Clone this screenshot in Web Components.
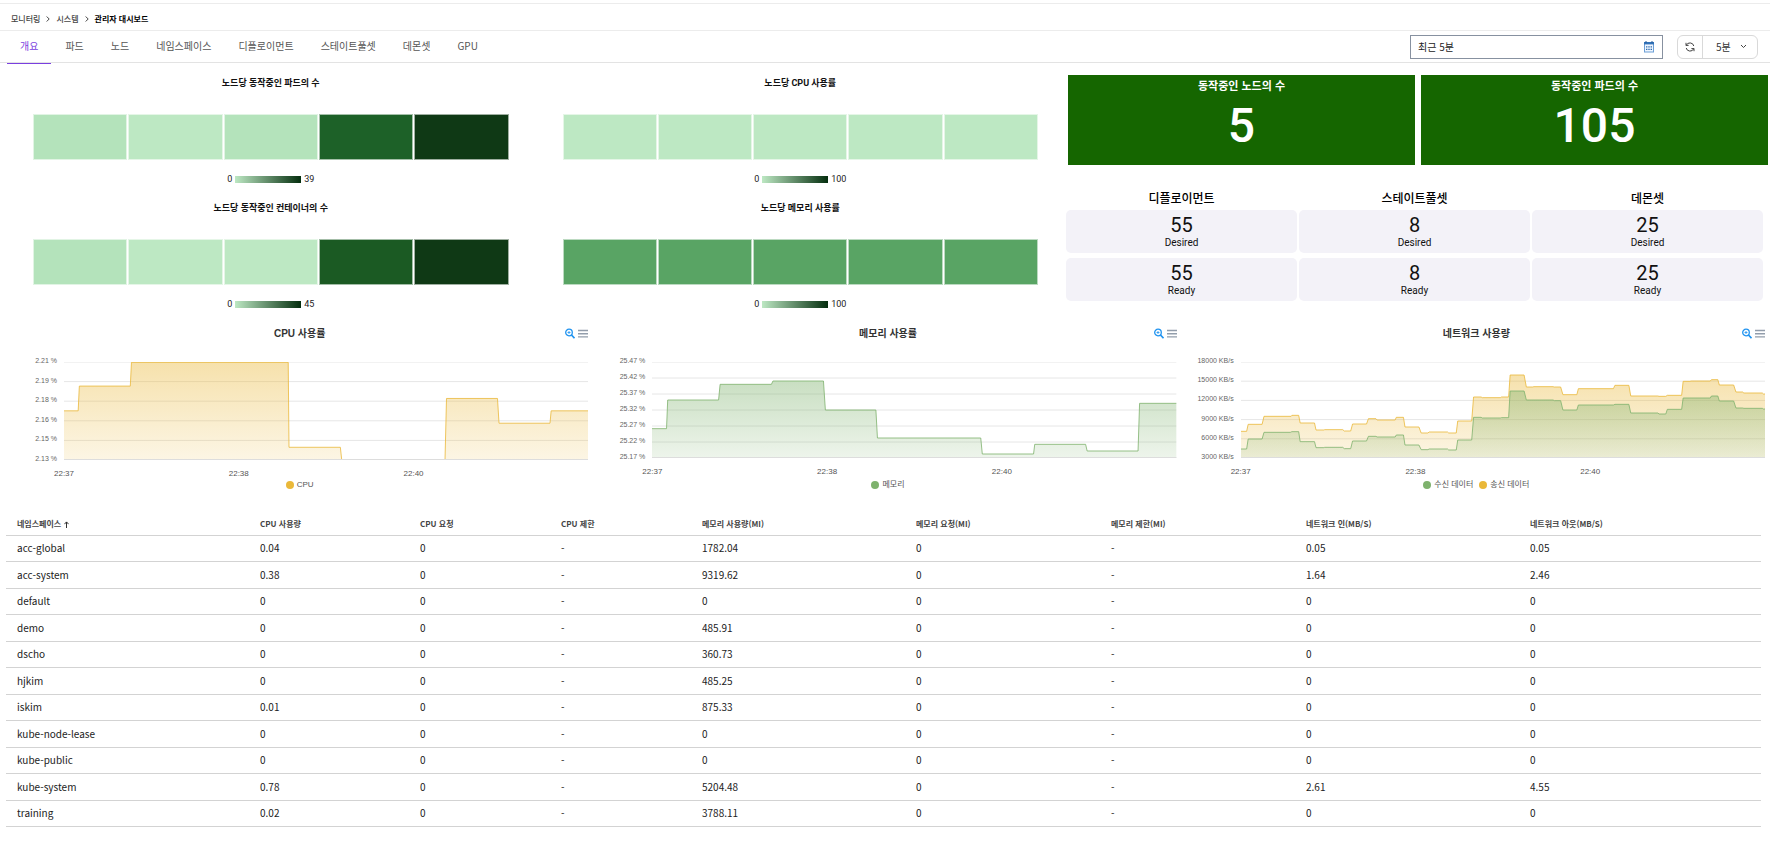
<!DOCTYPE html>
<html lang="ko">
<head>
<meta charset="utf-8">
<meta name="viewport" content="width=device-width, initial-scale=1">
<title>관리자 대시보드</title>
<style>
  body {
    margin: 0;
    background: #fff;
    color: #222;
    font-family: Roboto, "Noto Sans CJK KR", sans-serif;
    font-size: 10px;
    line-height: 12px;
  }
</style>
</head>
<body>
<dashboard-page></dashboard-page>

<script>
class Base extends HTMLElement {
  connectedCallback() {
    if (this.shadowRoot) return;
    this.attachShadow({ mode: 'open' }).innerHTML =
      `<style>*{box-sizing:border-box}:host{display:block;box-sizing:border-box}${this.css()}</style>${this.html()}`;
  }
}

customElements.define('bread-crumb', class extends Base {
  css() { return `
    :host { border-top: 1px solid #ececec; border-bottom: 1px solid #ececec; margin-top: 3px; }
    ol { list-style: none; margin: 0; padding: 4px 11px 0; height: 26px; display: flex; align-items: center; gap: 6px;
         font: 500 8px/12px "Noto Sans CJK KR", sans-serif; }
    li { display: flex; align-items: center; gap: 6px; }
    a { color: #444; text-decoration: none; }
    a[aria-current] { color: #000; font-weight: 700; }
    svg { width: 4px; height: 6px; fill: none; stroke: #444; }`; }
  html() {
    const chevron = '<svg viewBox="0 0 4 6" aria-hidden="true"><path d="M.7.5 3.2 3 .7 5.5"/></svg>';
    return `<nav aria-label="breadcrumb"><ol>
      <li><a href="#monitoring">모니터링</a>${chevron}</li>
      <li><a href="#system">시스템</a>${chevron}</li>
      <li><a href="#dashboard" aria-current="page">관리자 대시보드</a></li></ol></nav>`;
  }
});

customElements.define('tab-bar', class extends Base {
  css() { return `
    :host { display: flex; align-items: center; justify-content: space-between; padding: 0 12px 0 7px; height: 32px; border-bottom: 1px solid #e3e3e3; }
    nav { display: flex; gap: 1px; align-self: stretch; }
    button { border: 0; background: none; padding: 0 13px 2px; margin-bottom: -2px; font: 10px/12px "Noto Sans CJK KR", sans-serif; color: #555;
             border-bottom: 1px solid transparent; }
    button[aria-selected=true] { color: #7a3fe0; border-bottom-color: #7a3fe0; }
    .tools { display: flex; align-items: center; gap: 14px; padding-top: 1px; }`; }
  html() {
    const tabs = ['개요', '파드', '노드', '네임스페이스', '디플로이먼트', '스테이트풀셋', '데몬셋', 'GPU'];
    return `<nav role="tablist">${tabs.map((t, i) => `<button role="tab" aria-selected="${i === 0}">${t}</button>`).join('')}</nav>
      <div class="tools"><slot></slot></div>`;
  }
});

customElements.define('range-input', class extends Base {
  css() { return `
    label { display: flex; align-items: center; width: 253px; height: 24px; border: 1px solid #8791a0; padding: 0 8px 0 7px; background: #fff; }
    input { flex: 1; min-width: 0; border: 0; padding: 0; outline: 0; background: none; color: #222; font: 10px/14px "Noto Sans CJK KR", sans-serif; }
    svg { width: 10px; height: 12px; flex: none; }`; }
  html() { return `<label><input type="text" aria-label="조회 기간" value="최근 5분">
    <svg viewBox="0 0 10 12" aria-hidden="true"><rect x=".5" y="1.5" width="9" height="9.5" fill="#eef6ff" stroke="#6d9fd6"/>
    <path d="M0 1h10v2.4H0z" fill="#3272b8"/><path d="M2 0v2M8 0v2" stroke="#225a9c"/>
    <path d="M2 5.8h1.4M4.3 5.8h1.4M6.6 5.8H8M2 8.3h1.4M4.3 8.3h1.4M6.6 8.3H8" stroke="#2f6cb0" stroke-width="1.2"/></svg></label>`; }
});

customElements.define('refresh-control', class extends Base {
  css() { return `
    .group { display: flex; height: 24px; border: 1px solid #d9d9d9; border-radius: 6px; }
    button { width: 25px; padding: 0; border: 0; border-right: 1px solid #d9d9d9; background: none; display: flex; align-items: center; justify-content: center; }
    button svg { width: 10px; height: 10px; fill: none; stroke: #444; }
    .pick { position: relative; display: flex; align-items: center; }
    select { appearance: none; border: 0; background: none; width: 54px; padding: 0 12px 0 13px; height: 22px; color: #333; font: 10px/14px "Noto Sans CJK KR", sans-serif; }
    .pick svg { position: absolute; right: 10px; top: 8px; width: 7px; height: 5px; fill: none; stroke: #444; pointer-events: none; }`; }
  html() { return `<div class="group"><button aria-label="새로고침"><svg viewBox="0 0 10 10">
      <path d="M1 .8v2.6h2.6M1.2 3.4A4 4 0 0 1 8.8 4M9 9.2V6.6H6.4M8.8 6.6A4 4 0 0 1 1.2 6"/></svg></button>
    <div class="pick"><select aria-label="새로고침 주기"><option>5분</option></select>
    <svg viewBox="0 0 7 5" aria-hidden="true"><path d="M1 1l2.5 2.5L6 1"/></svg></div></div>`; }
});

customElements.define('heat-strip', class extends Base {
  css() { return `
    :host { padding: 0 26px 0 28px; }
    h3 { margin: 0 0 25px; text-align: center; font-size: 9px; line-height: 12px; font-weight: 700; color: #111; }
    .cells { display: grid; grid-template-columns: repeat(5, 1fr); gap: 1px; height: 46px; }
    .cells i { border: 1px solid rgba(255,255,255,.6); }
    .legend { display: flex; align-items: center; justify-content: center; gap: 3px; margin-top: 13px; font-size: 9px; line-height: 12px; }
    .legend i { width: 66px; height: 7px; background: linear-gradient(90deg, #bde8c3, #042e0e); }`; }
  html() {
    const cells = this.getAttribute('colors').split(' ').map(c => `<i style="background:${c}"></i>`).join('');
    return `<h3><slot></slot></h3><div class="cells">${cells}</div>
      <div class="legend"><span>0</span><i></i><span>${this.getAttribute('max')}</span></div>`;
  }
});

customElements.define('stat-card', class extends Base {
  css() { return `
    :host { background: #156600; color: #fff; text-align: center; height: 90px; padding-top: 4px; }
    h3 { margin: 0 0 10px; font: 700 11px/12px "Noto Sans CJK KR", sans-serif; }
    strong { display: block; font-size: 48px; line-height: 50px; font-weight: 500; }`; }
  html() { return `<h3><slot></slot></h3><strong>${this.getAttribute('value')}</strong>`; }
});

customElements.define('workload-stat', class extends Base {
  css() { return `
    :host { display: flex; flex-direction: column; gap: 5px; text-align: center; color: #111; }
    h3 { margin: 0; font: 500 12px/14px "Noto Sans CJK KR", sans-serif; color: #000; }
    .box { background: #f3f2f8; border-radius: 5px; padding: 5px 0 4px; display: flex; flex-direction: column; gap: 2px; }
    b { font-size: 20px; line-height: 20px; font-weight: 400; }
    span { font-size: 10px; line-height: 12px; }`; }
  html() { const v = this.getAttribute('value');
    return `<h3><slot></slot></h3><div class="box"><b>${v}</b><span>Desired</span></div><div class="box"><b>${v}</b><span>Ready</span></div>`; }
});

/* Stepped area chart. Each series is a list of [x0, x1, y] plateaus in viewBox units. */
customElements.define('metric-chart', class extends Base {
  css() { return `
    :host { display: flex; flex-direction: column; padding-right: 5px; font-family: "Liberation Sans", "Noto Sans CJK KR", sans-serif; --left: 59px; }
    header { position: relative; height: 12px; }
    h3 { margin: 0; text-align: center; font-size: 10px; line-height: 12px; font-weight: 700; color: #333; padding-left: 6px; }
    .tools { position: absolute; right: 0; top: 0; display: flex; gap: 3px; }
    .tools button { border: 0; padding: 0; background: none; width: 10px; height: 12px; }
    .tools svg { display: block; width: 10px; height: 12px; fill: none; }
    .body { display: grid; grid-template-columns: var(--left) 1fr; margin-top: 22px; }
    .y { display: flex; flex-direction: column; justify-content: space-between; text-align: right; padding-right: 7px;
         font-size: 7px; line-height: 8px; color: #666; margin: -5px 0 -3px; }
    .plot { display: block; width: 100%; height: ${this.getAttribute('plot')}px; overflow: hidden; }
    .plot * { vector-effect: non-scaling-stroke; }
    .x { display: grid; grid-template-columns: repeat(3, 1fr); margin: 9px 0 0 var(--left); font-size: 8px; line-height: 10px; color: #555; }
    .x span { width: 0; display: flex; justify-content: center; }
    .legend { margin-top: auto; padding: 1px 0 0 6px; display: flex; justify-content: center; gap: 6px; font-size: 8px; line-height: 10px; color: #555; }
    .legend span { display: flex; align-items: center; gap: 3px; }
    .legend i { width: 8px; height: 8px; border-radius: 50%; }`; }
  html() {
    const data = CHARTS[this.getAttribute('kind')];
    const { w, h } = data;
    const grid = data.labels.map((_, i) => { const y = h * i / (data.labels.length - 1);
      return `<path d="M0 ${y}H${w}" stroke="#e6e6e6"/>`; }).join('');
    const areas = data.series.map(s => {
      const line = s.steps.map(([a, b, y]) => `${a} ${y} ${b} ${y}`).join(' ');
      return `<linearGradient id="g${s.color.slice(1)}" x1="0" y1="0" x2="0" y2="1"><stop stop-color="${s.color}" stop-opacity=".42"/><stop offset="1" stop-color="${s.color}" stop-opacity=".13"/></linearGradient>
        <path d="M0 ${h + 4}L${line} ${w} ${h + 4}z" fill="url(#g${s.color.slice(1)})"/>
        <path d="M${line}" fill="none" stroke="${s.color}" stroke-opacity=".8"/>`; }).join('');
    const legend = data.series.slice().reverse().map(s => `<span><i style="background:${s.color}"></i>${s.name}</span>`).join('');
    return `<header><h3><slot></slot></h3><div class="tools">
        <button aria-label="확대"><svg viewBox="0 0 10 12" stroke="#1f93f0"><circle cx="4" cy="4.5" r="3.3" stroke-width="1.3"/><path d="M6.5 7l3 3.2" stroke-width="1.7"/><path d="M2.5 4.5h3M4 3v3" stroke-width=".8"/></svg></button>
        <button aria-label="메뉴"><svg viewBox="0 0 10 12" stroke="#929dab" stroke-width="1.4"><path d="M0 2.5h10M0 5.7h10M0 8.9h10"/></svg></button></div></header>
      <div class="body"><div class="y">${data.labels.map(l => `<span>${l}</span>`).join('')}</div>
      <svg class="plot" viewBox="0 0 ${w} ${h}" preserveAspectRatio="none" aria-hidden="true">${grid}${areas}<path d="M0 ${h}H${w}" stroke="#ddd" stroke-width="2"/></svg></div>
      <div class="x"><span>22:37</span><span>22:38</span><span>22:40</span></div>
      <div class="legend">${legend}</div>`;
  }
});

const YELLOW = '#eab839', GREEN = '#7eb26d';
const CHARTS = {
  cpu: { w: 1368, h: 293, labels: ['2.21 %', '2.19 %', '2.18 %', '2.16 %', '2.15 %', '2.13 %'],
    series: [{ name: 'CPU', color: YELLOW, steps: [[0,37,146],[40,173,72],[176,585,1],[587,721,255],[725,994,297],[998,1131,109],[1135,1268,183],[1271,1368,146]] }] },
  memory: { w: 1370, h: 288, labels: ['25.47 %', '25.42 %', '25.37 %', '25.32 %', '25.27 %', '25.22 %', '25.17 %'],
    series: [{ name: '메모리', color: GREEN, steps: [[0,38,200],[41,174,114],[178,312,67],[316,448,57],[453,585,144],[589,859,228],[863,997,276],[1000,1133,247],[1137,1270,267],[1274,1370,124]] }] },
  network: { w: 1391, h: 288, labels: ['18000 KB/s', '15000 KB/s', '12000 KB/s', '9000 KB/s', '6000 KB/s', '3000 KB/s'],
    series: [
      { name: '송신 데이터', color: YELLOW, steps: [[0,15,208],[19,56,187],[61,133,163],[135,153,160],[157,195,183],[199,220,204],[222,270,203],[274,291,207],[296,333,186],[338,358,170],[361,409,174],[412,431,166],[435,472,195],[478,496,213],[499,548,210],[551,571,213],[575,612,177],[617,637,105],[640,688,107],[691,710,105],[714,751,39],[757,773,75],[777,828,74],[831,848,75],[854,891,98],[895,988,80],[992,1029,70],[1034,1106,102],[1109,1127,103],[1131,1169,100],[1173,1191,58],[1194,1245,57],[1248,1265,53],[1269,1307,69],[1313,1331,90],[1334,1383,93],[1386,1391,96]] },
      { name: '수신 데이터', color: GREEN, steps: [[0,15,261],[19,56,231],[61,131,211],[135,153,209],[157,195,239],[199,220,257],[222,270,256],[274,291,260],[296,333,237],[338,358,223],[361,409,225],[412,431,219],[435,472,249],[478,496,263],[499,548,261],[551,571,264],[575,612,234],[617,637,166],[640,688,168],[691,710,167],[714,751,87],[757,828,114],[831,848,116],[854,891,144],[895,988,129],[992,1029,127],[1034,1106,153],[1109,1127,156],[1131,1169,142],[1173,1245,108],[1248,1265,102],[1269,1307,117],[1313,1331,138],[1334,1383,139],[1386,1391,141]] }
    ] }
};

customElements.define('namespace-table', class extends Base {
  css() { return `
    table { width: 100%; border-collapse: collapse; table-layout: fixed; font-family: "Noto Sans CJK KR", sans-serif; }
    th, td { text-align: left; padding: 0 0 0 11px; border-bottom: 1px solid #d3d3d3; white-space: nowrap; }
    th { height: 24px; padding-top: 2px; font-size: 8px; line-height: 12px; font-weight: 700; color: #444; }
    td { height: 26px; font-size: 10px; line-height: 14px; color: #222; }
    tr:nth-child(even) td { height: 27px; }
    svg { width: 5px; height: 7px; margin-left: 3px; fill: none; stroke: #333; vertical-align: -1px; }`; }
  html() {
    const widths = [243, 160, 141, 141, 214, 195, 195, 224, 242];
    const heads = ['네임스페이스', 'CPU 사용량', 'CPU 요청', 'CPU 제한', '메모리 사용량(MI)', '메모리 요청(MI)', '메모리 제한(MI)', '네트워크 인(MB/S)', '네트워크 아웃(MB/S)'];
    const rows = [['acc-global','0.04','1782.04','0.05','0.05'],['acc-system','0.38','9319.62','1.64','2.46'],['default','0','0','0','0'],
      ['demo','0','485.91','0','0'],['dscho','0','360.73','0','0'],['hjkim','0','485.25','0','0'],['iskim','0.01','875.33','0','0'],
      ['kube-node-lease','0','0','0','0'],['kube-public','0','0','0','0'],['kube-system','0.78','5204.48','2.61','4.55'],['training','0.02','3788.11','0','0']];
    const arrow = '<svg viewBox="0 0 5 7" aria-hidden="true"><path d="M2.5 7V1M.4 3.2l2.1-2.3 2.1 2.3"/></svg>';
    return `<table><colgroup>${widths.map(w => `<col style="width:${w}px">`).join('')}</colgroup>
      <thead><tr>${heads.map((t, i) => `<th scope="col">${t}${i ? '' : arrow}</th>`).join('')}</tr></thead>
      <tbody>${rows.map(([n, cpu, mem, rx, tx]) => `<tr>${[n, cpu, '0', '-', mem, '0', '-', rx, tx].map(c => `<td>${c}</td>`).join('')}</tr>`).join('')}</tbody></table>`;
  }
});

customElements.define('dashboard-page', class extends Base {
  css() { return `
    .top { display: grid; grid-template-columns: 3fr 3fr 4fr; padding-left: 5px; }
    .heat { display: flex; flex-direction: column; gap: 17px; padding-top: 14px; }
    .stats { display: grid; grid-template-columns: 1fr 1fr; gap: 6px; padding: 12px 2px 0 4px; }
    .workloads { display: grid; grid-template-columns: repeat(3, 1fr); gap: 2px; padding: 26px 7px 0 2px; }
    .charts { display: grid; grid-template-columns: repeat(3, 1fr); padding: 18px 0 0 5px; }
    .table { padding: 21px 9px 14px 6px; }`; }
  html() { return `
    <bread-crumb></bread-crumb>
    <tab-bar><range-input></range-input><refresh-control></refresh-control></tab-bar>
    <main>
      <section class="top">
        <div class="heat">
          <heat-strip max="39" colors="#b4e3bb #bde8c3 #b4e3bb #1d6128 #0f3915">노드당 동작중인 파드의 수</heat-strip>
          <heat-strip max="45" colors="#b4e3bb #bde8c3 #bde8c3 #1b5a23 #0f3915">노드당 동작중인 컨테이너의 수</heat-strip>
        </div>
        <div class="heat">
          <heat-strip max="100" colors="#bde8c3 #bde8c3 #bde8c3 #bde8c3 #bde8c3">노드당 CPU 사용률</heat-strip>
          <heat-strip max="100" colors="#59a464 #59a464 #59a464 #59a464 #59a464">노드당 메모리 사용률</heat-strip>
        </div>
        <div>
          <div class="stats"><stat-card value="5">동작중인 노드의 수</stat-card><stat-card value="105">동작중인 파드의 수</stat-card></div>
          <div class="workloads"><workload-stat value="55">디플로이먼트</workload-stat><workload-stat value="8">스테이트풀셋</workload-stat><workload-stat value="25">데몬셋</workload-stat></div>
        </div>
      </section>
      <section class="charts">
        <metric-chart kind="cpu" plot="98">CPU 사용률</metric-chart>
        <metric-chart kind="memory" plot="96">메모리 사용률</metric-chart>
        <metric-chart kind="network" plot="96">네트워크 사용량</metric-chart>
      </section>
      <section class="table"><namespace-table></namespace-table></section>
    </main>`; }
});
</script>
</body>
</html>
